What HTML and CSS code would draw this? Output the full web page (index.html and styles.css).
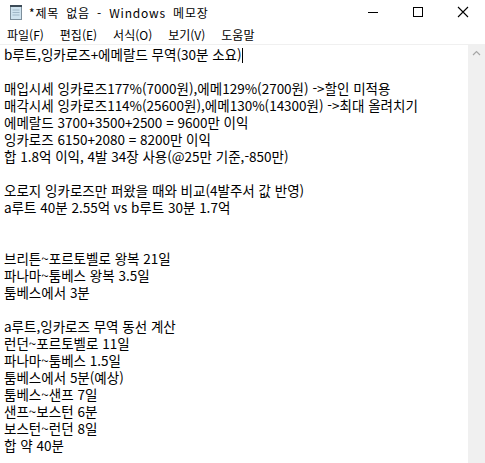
FILE: index.html
```html
<!DOCTYPE html>
<html lang="ko">
<head>
    <meta charset="UTF-8">
    <title>*제목 없음 - Windows 메모장</title>
    <link rel="stylesheet" href="styles.css">
</head>
<body>
    <div class="window">
        <!-- 제목 표시줄 -->
        <div class="titlebar">
            <svg class="app-icon" width="14" height="16" viewBox="0 0 14 16">
                <rect x="1.5" y="2.5" width="11" height="13" fill="#cfe3ef" stroke="#7d8f9c"/>
                <rect x="1" y="1" width="12" height="2" fill="#3c4b57"/>
                <line x1="3.5" y1="6" x2="10.5" y2="6" stroke="#9fb6c6"/>
                <line x1="3.5" y1="8.5" x2="10.5" y2="8.5" stroke="#9fb6c6"/>
                <line x1="3.5" y1="11" x2="10.5" y2="11" stroke="#9fb6c6"/>
            </svg>
            <span class="title">*제목 없음 - Windows 메모장</span>
            <div class="controls">
                <span class="ctl"><svg width="12" height="12" viewBox="0 0 12 12"><line x1="1" y1="6.5" x2="11" y2="6.5" stroke="#000"/></svg></span>
                <span class="ctl"><svg width="12" height="12" viewBox="0 0 12 12"><rect x="1.5" y="1.5" width="9" height="9" fill="none" stroke="#000"/></svg></span>
                <span class="ctl"><svg width="12" height="12" viewBox="0 0 12 12"><path d="M1 1 L11 11 M11 1 L1 11" stroke="#000" stroke-width="1.1"/></svg></span>
            </div>
        </div>

        <!-- 메뉴 -->
        <div class="menubar">
            <span>파일(F)</span>
            <span>편집(E)</span>
            <span>서식(O)</span>
            <span>보기(V)</span>
            <span>도움말</span>
        </div>

        <!-- 본문 -->
        <div class="editor">
            <div class="text">
                <div class="line">b루트,잉카로즈+에메랄드 무역(30분 소요)<span class="caret"></span></div>
                <div class="line"> </div>
                <div class="line">매입시세 잉카로즈177%(7000원),에메129%(2700원) -&gt;할인 미적용</div>
                <div class="line">매각시세 잉카로즈114%(25600원),에메130%(14300원) -&gt;최대 올려치기</div>
                <div class="line">에메랄드 3700+3500+2500 = 9600만 이익</div>
                <div class="line">잉카로즈 6150+2080 = 8200만 이익</div>
                <div class="line">합 1.8억 이익, 4발 34장 사용(@25만 기준,-850만)</div>
                <div class="line"> </div>
                <div class="line">오로지 잉카로즈만 퍼왔을 때와 비교(4발주서 값 반영)</div>
                <div class="line">a루트 40분 2.55억 vs b루트 30분 1.7억</div>
                <div class="line"> </div>
                <div class="line"> </div>
                <div class="line">브리튼~포르토벨로 왕복 21일</div>
                <div class="line">파나마~툼베스 왕복 3.5일</div>
                <div class="line">툼베스에서 3분</div>
                <div class="line"> </div>
                <div class="line">a루트,잉카로즈 무역 동선 계산</div>
                <div class="line">런던~포르토벨로 11일</div>
                <div class="line">파나마~툼베스 1.5일</div>
                <div class="line">툼베스에서 5분(예상)</div>
                <div class="line">툼베스~샌프 7일</div>
                <div class="line">샌프~보스턴 6분</div>
                <div class="line">보스턴~런던 8일</div>
                <div class="line">합 약 40분</div>
            </div>
            <div class="scrollbar">
                <svg class="arrow" width="9" height="6" viewBox="0 0 9 6"><path d="M1 5 L4.5 1.5 L8 5" fill="none" stroke="#a6a6a6" stroke-width="1.2"/></svg>
            </div>
        </div>
    </div>
</body>
</html>
```

FILE: styles.css
```css
* {
    margin: 0;
    padding: 0;
    box-sizing: border-box;
}

body {
    width: 485px;
    height: 463px;
    overflow: hidden;
    background: #fff;
    font-family: "Noto Sans CJK KR", "Liberation Sans", sans-serif;
    color: #000;
}

.window {
    display: flex;
    flex-direction: column;
    height: 463px;
}

/* 제목 표시줄 */
.titlebar {
    height: 24px;
    display: flex;
    align-items: center;
    padding-left: 9px;
}

.app-icon {
    margin-right: 6px;
}

.title {
    font-size: 12px;
    letter-spacing: 0.8px;
    word-spacing: 3px;
    flex: 1;
}

.controls {
    display: flex;
    align-items: center;
}

.ctl {
    width: 45px;
    height: 24px;
    display: flex;
    align-items: center;
    justify-content: center;
}

/* 메뉴 */
.menubar {
    height: 21px;
    display: flex;
    align-items: center;
    padding-left: 7px;
    gap: 16px;
    font-size: 12px;
    border-bottom: 1px solid #f0f0f0;
}

/* 본문 */
.editor {
    flex: 1;
    display: flex;
    min-height: 0;
}

.text {
    flex: 1;
    padding: 1px 0 0 4px;
    font-size: 13.5px;
    line-height: 17px;
    overflow: hidden;
}

.line {
    white-space: pre;
    height: 17px;
}

.caret {
    display: inline-block;
    width: 1px;
    height: 15px;
    background: #000;
    vertical-align: -3px;
}

.scrollbar {
    width: 17px;
    background: #f0f0f0;
    display: flex;
    justify-content: center;
    padding-top: 5px;
}

.arrow {
    display: block;
}
```
